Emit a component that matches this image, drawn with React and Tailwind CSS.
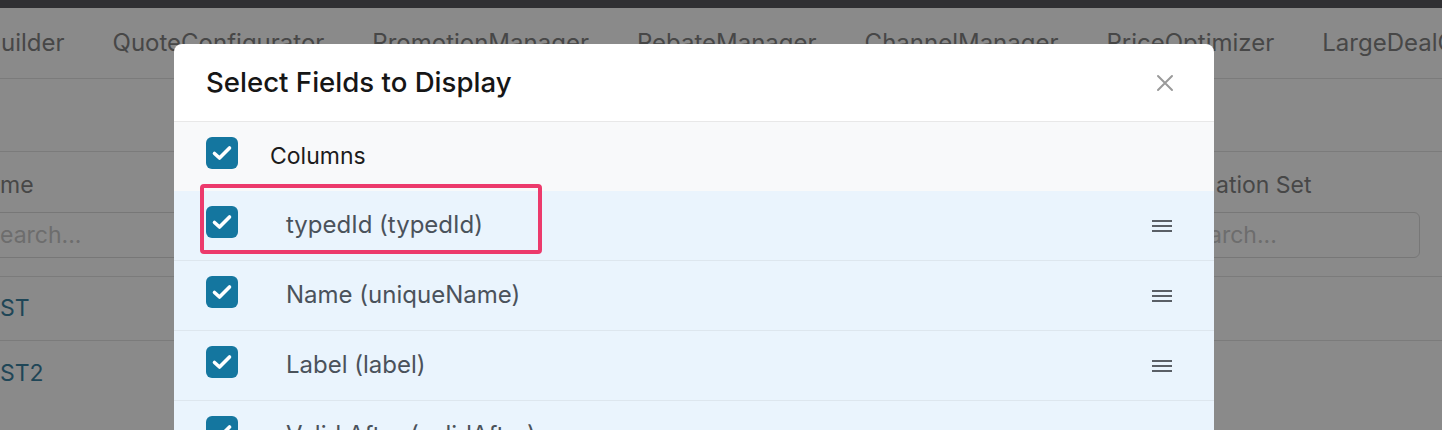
import React from "react";

const tabs = ["uilder", "QuoteConfigurator", "PromotionManager", "RebateManager", "ChannelManager", "PriceOptimizer", "LargeDealCalculator"];

const fields = [
  { label: "typedId (typedId)", marked: true },
  { label: "Name (uniqueName)" },
  { label: "Label (label)" },
  { label: "Valid After (validAfter)" },
];

const CheckBox = () => (
  <span className="mb-[8px] flex h-[32px] w-[32px] shrink-0 items-center justify-center rounded-[6px] bg-[#14769f]">
    <svg width="32" height="32" viewBox="0 0 32 32" fill="none">
      <polyline points="8.5,16.5 13.5,21 23.5,11" stroke="white" strokeWidth="3.6" strokeLinecap="round" strokeLinejoin="round" />
    </svg>
  </span>
);

const DragHandle = () => (
  <svg width="20" height="14" viewBox="0 0 20 14" className="text-[#5a5f66]">
    <rect x="0" y="1" width="20" height="2" fill="currentColor" />
    <rect x="0" y="6" width="20" height="2" fill="currentColor" />
    <rect x="0" y="11" width="20" height="2" fill="currentColor" />
  </svg>
);

const FieldRow = ({ field }) => (
  <div className="relative flex h-[70px] items-center border-b border-[#dde6ee] bg-[#eaf4fd] pl-[32px] pr-[42px]">
    <CheckBox />
    <span className="ml-[48px] mb-[2px] flex-1 text-[24px] text-[#4a525b]">{field.label}</span>
    <DragHandle />
    {field.marked && (
      <div className="absolute left-[26px] top-[-7px] h-[70px] w-[342px] rounded-[4px] border-[4px] border-[#ec3a6c]" />
    )}
  </div>
);

const App = () => {
  return (
    <div className="relative h-[430px] w-[1442px] overflow-hidden bg-[#8a8a8a] font-['Inter','Liberation_Sans',sans-serif]">
      <div className="h-[8px] bg-[#303033]" />

      <div className="flex h-[71px] items-center gap-[48px] whitespace-nowrap border-b border-[#7b7b7b] pl-[1px] text-[24px] text-[#474747]">
        {tabs.map((tab) => (
          <span key={tab}>{tab}</span>
        ))}
      </div>

      <div className="h-[73px] border-b border-[#7b7b7b]" />

      <div className="flex h-[125px] justify-between border-b border-[#7b7b7b]">
        <div className="w-[300px]">
          <div className="h-[60px] pt-[18px] text-[23px] leading-[30px] text-[#474747]">me</div>
          <div className="flex h-[46px] items-center border-y border-[#777] text-[23px] text-[#6d6d6d]">earch...</div>
        </div>
        <div className="w-[420px] pr-[22px]">
          <div className="h-[60px] pl-[194px] pt-[18px] text-[23px] leading-[30px] text-[#474747]">ation Set</div>
          <div className="flex h-[46px] items-center rounded-[6px] border border-[#777] pl-[186px] text-[23px] text-[#6d6d6d]">arch...</div>
        </div>
      </div>

      <div className="flex h-[64px] items-center border-b border-[#7b7b7b] text-[23px] text-[#1f4657]">ST</div>
      <div className="flex h-[64px] items-center text-[23px] text-[#1f4657]">ST2</div>

      <div className="absolute left-[174px] top-[44px] w-[1040px] overflow-hidden rounded-t-[8px] bg-white">
        <div className="flex h-[78px] items-center justify-between border-b border-[#e8e8e8] pl-[32px] pr-[40px]">
          <h2 className="text-[27.6px] font-medium text-[#161616]">Select Fields to Display</h2>
          <svg width="18" height="18" viewBox="0 0 18 18">
            <path d="M2 2 L16 16 M16 2 L2 16" stroke="#9a9a9a" strokeWidth="2" strokeLinecap="round" />
          </svg>
        </div>
        <div className="flex h-[69px] items-center bg-[#f8f9fa] pl-[32px]">
          <CheckBox />
          <span className="ml-[32px] text-[23px] text-[#1c1c1c]">Columns</span>
        </div>
        {fields.map((field) => (
          <FieldRow key={field.label} field={field} />
        ))}
      </div>
    </div>
  );
};

export default App;
